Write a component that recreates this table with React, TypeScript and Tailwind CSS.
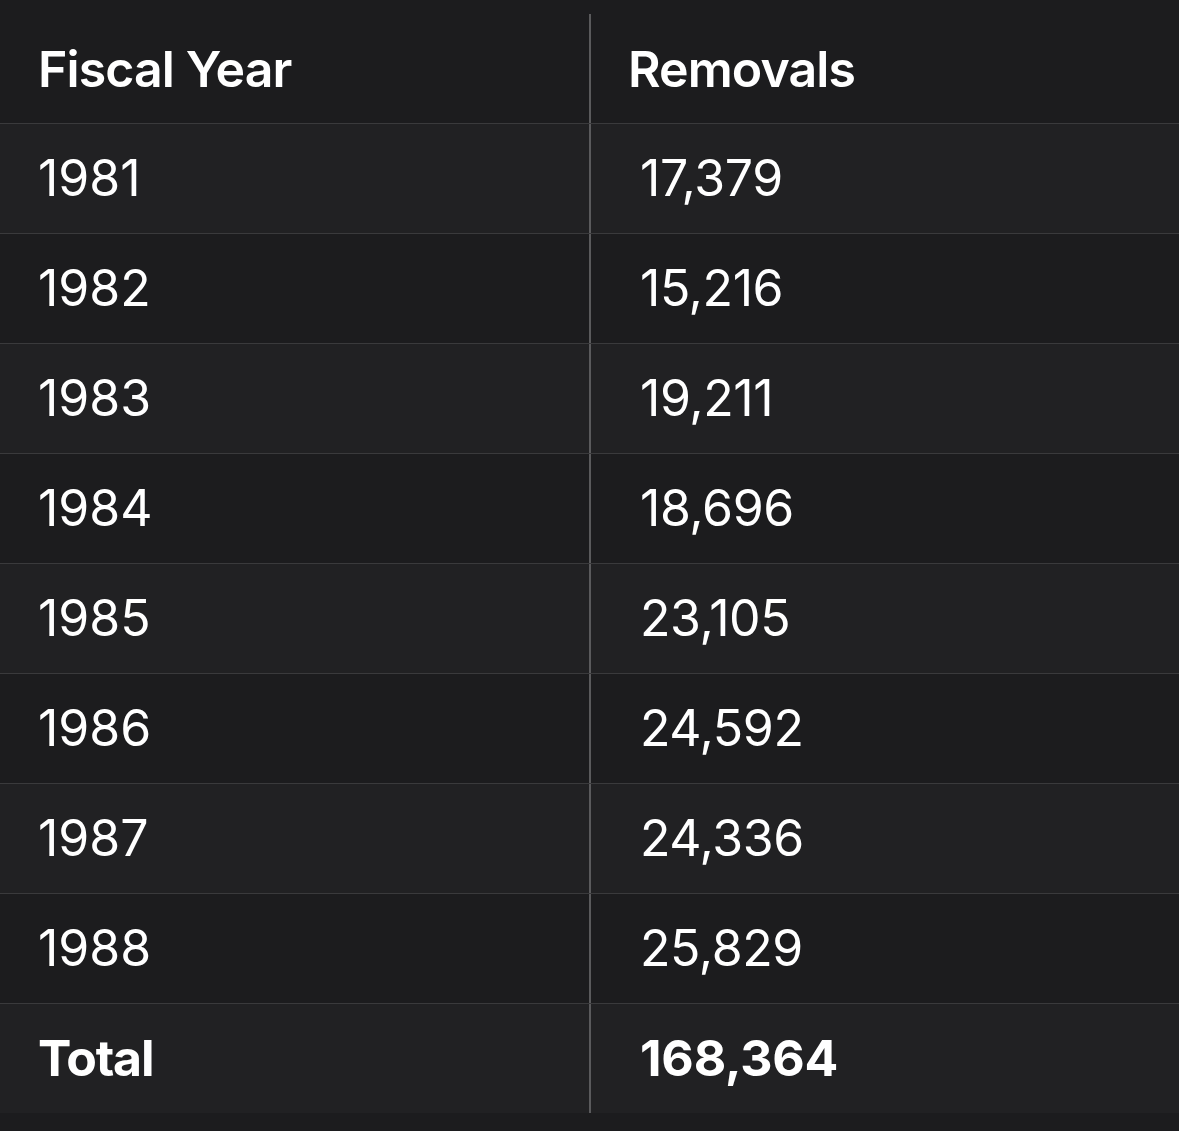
const rows = [
  { year: '1981', value: '17,379' },
  { year: '1982', value: '15,216' },
  { year: '1983', value: '19,211' },
  { year: '1984', value: '18,696' },
  { year: '1985', value: '23,105' },
  { year: '1986', value: '24,592' },
  { year: '1987', value: '24,336' },
  { year: '1988', value: '25,829' },
];

const font = { fontFamily: 'Inter, "Noto Sans", sans-serif' };

export default function App() {
  return (
    <div className="w-[1179px] h-[1131px] bg-[#1c1c1e] pt-[14px] text-white" style={font}>
      {/* header */}
      <div className="flex h-[109px] text-[50px] font-semibold tracking-[-0.9px]">
        <div className="w-[591px] shrink-0 border-r-2 border-[#5a5a5c] pl-[38px] flex items-center pt-[2px]">
          Fiscal Year
        </div>
        <div className="flex-1 pl-[37px] flex items-center pt-[2px]">Removals</div>
      </div>

      {rows.map((r, i) => (
        <div
          key={r.year}
          className={`flex h-[110px] border-t border-[#3a3a3c] text-[50px] font-normal ${
            i % 2 === 0 ? 'bg-[#212123]' : 'bg-[#1c1c1e]'
          }`}
        >
          <div className="w-[591px] shrink-0 border-r-2 border-[#5a5a5c] pl-[38px] flex items-center">
            {r.year}
          </div>
          <div className="flex-1 pl-[49px] flex items-center tracking-[-0.4px]">{r.value}</div>
        </div>
      ))}

      {/* total */}
      <div className="flex h-[110px] border-t border-[#3a3a3c] bg-[#212123] text-[50px] font-bold">
        <div className="w-[591px] shrink-0 border-r-2 border-[#5a5a5c] pl-[38px] flex items-center tracking-[-1.2px]">
          Total
        </div>
        <div className="flex-1 pl-[49px] flex items-center tracking-[-0.2px]">168,364</div>
      </div>
    </div>
  );
}
